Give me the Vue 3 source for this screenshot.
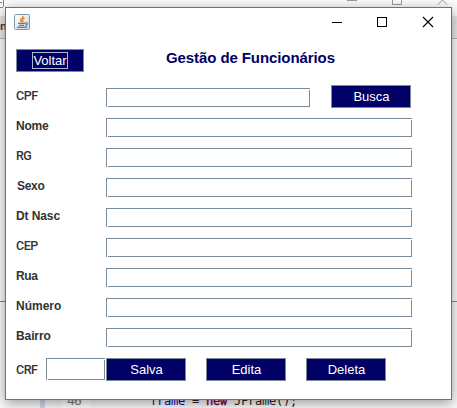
<script setup>
const fields = [
  { label: 'Nome', spacing: 'w-nome' },
  { label: 'RG', spacing: 'w-caps' },
  { label: 'Sexo', spacing: 'w-sexo' },
  { label: 'Dt Nasc', spacing: 'w-nasc' },
  { label: 'CEP', spacing: 'w-caps' },
  { label: 'Rua', spacing: 'w-rua' },
  { label: 'Número', spacing: 'w-numero' },
  { label: 'Bairro', spacing: 'w-bairro' },
]
const actions = ['Salva', 'Edita', 'Deleta']
</script>

<template>
  <div class="desktop">
    <div class="back-window">
      <div class="back-title">
        <svg class="back-icon" width="5" height="8" viewBox="0 0 5 8"><path d="M0 7.5H2.5L3.5 6.5V0M0 2.5H2" fill="none" stroke="#6f8798" /></svg>
        <svg class="back-controls" width="110" height="6" viewBox="0 0 110 6" fill="none" stroke="#999">
          <path d="M0 .5H10M45.500 0V4.500H54.500V0M91 4.500L95.500 0L100 4.500" />
        </svg>
      </div>
      <div class="back-tab">n</div>
      <div class="back-body"></div>
    </div>
    <div class="editor">
      <div class="gutter"></div>
      <div class="line-no"><span>46</span></div>
      <pre class="code"><b class="ident">frame</b> = <b class="kw">new</b> JFrame();</pre>
    </div>

    <main class="frame">
      <header class="titlebar">
        <svg class="java" width="16" height="16" viewBox="0 0 16 16">
          <defs><linearGradient id="tile" x2="1" y2="1"><stop stop-color="#fff" /><stop offset="1" stop-color="#ccd7df" /></linearGradient></defs>
          <rect x=".5" y=".5" width="15" height="15" rx="1" fill="url(#tile)" stroke="#7f97a9" />
          <path d="M9 2C10 4 6.300 4.700 6.600 6.100C6.700 7 7.600 7.400 7.800 8.200M10.600 4.200C8.300 5.200 7.900 6 8.900 6.900C9.300 7.400 8.800 8 8.400 8.300" fill="none" stroke="#f08312" stroke-width="1.400" />
          <path d="M4 9.300H11M5 11.300H10M3 13.300H11.500L13 12.600M11 9C14.500 8.300 13.800 11.100 11 11.200" fill="none" stroke="#5b7f9a" stroke-width="1.200" />
        </svg>
        <svg class="controls" width="102" height="12" viewBox="0 0 102 12" fill="none" stroke="#000">
          <path d="M0 6.500H10" />
          <rect x="45.500" y="1.500" width="9" height="9" />
          <path d="M91 1L101 11M101 1L91 11" stroke-width="1.100" />
        </svg>
      </header>

      <div class="heading">
        <button class="btn back"><span class="focus">Voltar</span></button>
        <h1>Gestão de Funcionários</h1>
      </div>

      <div class="row cpf">
        <label><span class="w-caps">CPF</span></label>
        <div class="input short"></div>
        <button class="btn search">Busca</button>
      </div>

      <div v-for="f in fields" :key="f.label" class="row">
        <label><span :class="f.spacing">{{ f.label }}</span></label>
        <div class="input"></div>
      </div>

      <footer class="footer">
        <label><span class="w-caps">CRF</span></label>
        <div class="input crf"></div>
        <div class="actions">
          <button v-for="a in actions" :key="a" class="btn">{{ a }}</button>
        </div>
      </footer>
    </main>
  </div>
</template>

<style>
body { margin: 0; overflow: hidden; }
</style>

<style scoped>
* { box-sizing: border-box; }
.desktop {
  position: relative;
  width: 457px;
  height: 408px;
  overflow: hidden;
  background: #f5f5f5;
  font-family: "Liberation Sans", Arial, sans-serif;
}
.back-window { height: 302px; border-bottom: 1px solid #858585; box-shadow: 0 2px 10px #0006; }
.back-title { display: flex; justify-content: space-between; height: 16px; background: #fcfcfc; }
.back-tab {
  height: 23px;
  border-bottom: 1px solid #b5b5b5;
  background: #e8e8e8;
  color: #57313b;
  font: bold 11px/21px "Liberation Sans", sans-serif;
  letter-spacing: -1px;
}
.back-body { height: 262px; background: #fbfbfb; }
.editor { display: flex; height: 106px; background: #fafafa; }
.gutter { width: 45px; border-right: 5px solid #d5d9ea; }
.line-no {
  width: 46px;
  padding: 91px 0 0 16px;
  color: #777;
  font: 13px/16px "DejaVu Sans Mono", monospace;
  letter-spacing: -0.8px;
}
.line-no span { display: block; width: 30px; padding-left: 6px; background: #fff; }
.line-no, .code { height: 106px; }
.code {
  margin: 0;
  padding: 91px 0 0 59px;
  color: #222;
  font: 12px/16px "DejaVu Sans Mono", monospace;
  letter-spacing: -0.22px;
}
.code b { font-weight: normal; }
.ident { color: #0000b5; }
.kw { color: #7f0055; -webkit-text-stroke: 0.4px #7f0055; }

.frame {
  position: absolute;
  left: 5px;
  top: 7px;
  width: 447px;
  height: 393px;
  border: 1px solid #707070;
  background: #fff;
  box-shadow: 0 3px 12px #0006;
}
.titlebar { display: flex; justify-content: space-between; height: 41px; padding: 6px 17px 0 8px; }
.controls { margin-top: 2px; }
.heading { display: flex; height: 31px; padding-left: 10px; }
h1 {
  margin: 0 0 0 82px;
  color: #000066;
  font-size: 15px;
  font-weight: bold;
  line-height: 18px;
  letter-spacing: -0.09px;
  white-space: nowrap;
}
.row { display: flex; height: 30px; padding: 8px 0 0 10px; }
label {
  width: 90px;
  height: 19px;
  color: #333;
  font-size: 12px;
  font-weight: bold;
  line-height: 16px;
  white-space: nowrap;
}
.input {
  width: 306px;
  height: 19px;
  background:
    linear-gradient(#7a8a99, #7a8a99) left top / 100% 1px no-repeat,
    linear-gradient(#7a8a99, #7a8a99) left top / 1px 100% no-repeat,
    linear-gradient(#fff, #fff) 1px bottom / 1px 1px no-repeat,
    linear-gradient(#fff, #fff) right 1px / 1px 1px no-repeat,
    linear-gradient(#7a8a99, #7a8a99) left bottom / 100% 1px no-repeat,
    linear-gradient(#7a8a99, #7a8a99) right top / 1px 100% no-repeat,
    #fff;
  background-position: left top, left top, 1px bottom, right 1px, left bottom, right top;
}
.input.short { width: 204px; }
.btn {
  width: 80px;
  height: 23px;
  padding: 0 0 0 1px;
  border: 1px solid #7a8a99;
  border-radius: 0;
  background: #000066;
  color: #fff;
  font: 13px/21px "Liberation Sans", Arial, sans-serif;
  text-align: center;
}
.back { width: 68px; padding: 0; display: flex; align-items: center; justify-content: center; }
.focus { width: 36px; height: 17px; border: 1px solid #a9bad0; line-height: 16px; margin-top: -1px; }
.search { margin: -3px 0 0 21px; }
.footer { display: flex; padding: 8px 0 0 10px; }
.footer label { width: 30px; padding-top: 4px; }
.input.crf { width: 59px; height: 22px; margin-right: 1px; }
.actions { display: flex; gap: 20px; }
.w-caps { font-family: Roboto, sans-serif; font-weight: 500; font-size: 12.5px; letter-spacing: -0.5px; }
.w-nome { letter-spacing: -0.2px; }
.w-sexo { letter-spacing: -0.3px; margin-left: 1px; }
.w-nasc { letter-spacing: -0.1px; }
.w-rua { letter-spacing: -0.4px; }
.w-numero { letter-spacing: 0; }
.w-bairro { letter-spacing: -0.1px; }
</style>
